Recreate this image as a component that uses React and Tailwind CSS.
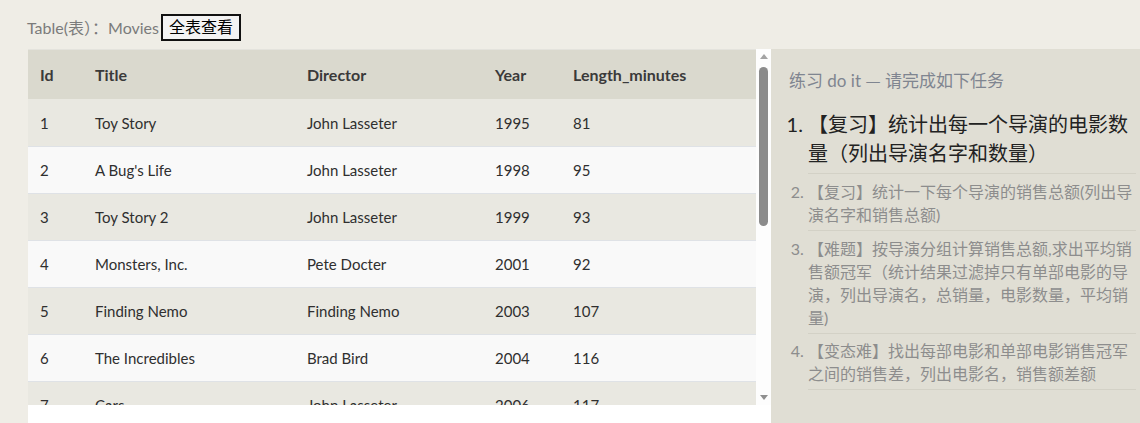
import React from "react";

const rows = [
  [1, "Toy Story", "John Lasseter", 1995, 81],
  [2, "A Bug's Life", "John Lasseter", 1998, 95],
  [3, "Toy Story 2", "John Lasseter", 1999, 93],
  [4, "Monsters, Inc.", "Pete Docter", 2001, 92],
  [5, "Finding Nemo", "Finding Nemo", 2003, 107],
  [6, "The Incredibles", "Brad Bird", 2004, 116],
  [7, "Cars", "John Lasseter", 2006, 117],
  [8, "Ratatouille", "Brad Bird", 2007, 115],
];

function Scrollbar() {
  return (
    <div className="w-[15px] h-full bg-[#fdfdfd] flex flex-col items-center">
      <div className="mt-[5px] w-0 h-0 border-l-[4px] border-r-[4px] border-b-[5px] border-l-transparent border-r-transparent border-b-[#a3a3a3]" />
      <div className="mt-[8px] w-[9px] h-[159px] rounded-full bg-[#8b8b8b]" />
      <div className="flex-1" />
      <div className="mb-[5px] w-0 h-0 border-l-[4px] border-r-[4px] border-t-[5px] border-l-transparent border-r-transparent border-t-[#8f8f8f]" />
    </div>
  );
}

export default function App() {
  return (
    <div className="w-[1140px] h-[423px] overflow-hidden bg-[#efede6] flex flex-col font-['Lato','Noto_Sans_CJK_SC',sans-serif]">
      <div className="h-[49px] shrink-0 pl-[27px] flex items-center gap-[2px] pt-[5px]">
        <span className="text-[16px] text-[#7b7b7b]">
          Table(表<span className="font-['Noto_Sans_CJK_SC',sans-serif]">）：</span>Movies
        </span>
        <button className="border-2 border-[#111] bg-[#f3f3f3] px-[6px] h-[27px] text-[16px] leading-[20px] text-black">
          全表查看
        </button>
      </div>
      <div className="flex flex-1 min-h-0">
        <div className="pl-[28px] w-[771px] shrink-0 flex flex-col">
          <div className="flex h-[356px] shrink-0">
            <div className="w-[728px] h-full overflow-hidden border-t border-[#e4e3dd]">
              <table className="w-full border-collapse text-[15px] text-[#2f2f2f]">
                <colgroup>
                  <col className="w-[55px]" />
                  <col className="w-[212px]" />
                  <col className="w-[188px]" />
                  <col className="w-[78px]" />
                  <col />
                </colgroup>
                <thead>
                  <tr className="bg-[#dad9ce] h-[49px]">
                    {["Id", "Title", "Director", "Year", "Length_minutes"].map((h) => (
                      <th key={h} className="text-left font-bold text-[16px] px-[12px] text-[#3a3a3a]">
                        {h}
                      </th>
                    ))}
                  </tr>
                </thead>
                <tbody>
                  {rows.map((r, i) => (
                    <tr
                      key={r[0]}
                      className={
                        (i % 2 === 0 ? "bg-[#e9e8e1]" : "bg-[#f9f9f9]") +
                        " h-[47px] border-b border-[#dfe2e6]"
                      }
                    >
                      {r.map((c, j) => (
                        <td key={j} className="px-[12px] pt-[1px]">
                          {c}
                        </td>
                      ))}
                    </tr>
                  ))}
                </tbody>
              </table>
            </div>
            <Scrollbar />
          </div>
          <div className="flex-1 bg-white overflow-hidden pl-[54px] pt-[13px]">
            <span className="text-[15px] text-[#8a8a8a]">结果(表)</span>
          </div>
        </div>
        <div className="flex-1 bg-[#e0ded4] pl-[18px] pr-[4px] pt-[19px]">
          <div className="text-[17px] leading-[24px] text-[#7f8590]">
            练习 do it <span className="font-['Noto_Sans_CJK_SC',sans-serif]">—</span> 请完成如下任务
          </div>
          <ol className="list-decimal pl-[19px] mt-[17px]">
            <li className="text-[20px] leading-[29px] text-[#222] pb-[5px] border-b border-[#d3d1c6]">
              【复习】统计出每一个导演的电影数量（列出导演名字和数量）
            </li>
            <li className="text-[16px] leading-[23px] text-[#8d8d8d] pt-[6px] pb-[4px] border-b border-[#d3d1c6]">
              【复习】统计一下每个导演的销售总额(列出导演名字和销售总额)
            </li>
            <li className="text-[16px] leading-[23px] text-[#8d8d8d] pt-[6px] pb-[4px] border-b border-[#d3d1c6]">
              【难题】按导演分组计算销售总额,求出平均销售额冠军（统计结果过滤掉只有单部电影的导演，列出导演名，总销量，电影数量，平均销量)
            </li>
            <li className="text-[16px] leading-[23px] text-[#8d8d8d] pt-[5px] pb-[4px] border-b border-[#d3d1c6]">
              【变态难】找出每部电影和单部电影销售冠军之间的销售差，列出电影名，销售额差额
            </li>
          </ol>
        </div>
      </div>
    </div>
  );
}
